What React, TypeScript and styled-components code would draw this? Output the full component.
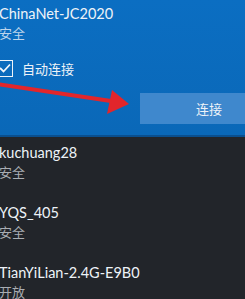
import React from 'react';
import styled, { createGlobalStyle } from 'styled-components';

const GlobalStyle = createGlobalStyle`
  html, body {
    margin: 0;
    padding: 0;
    background: #22252a;
    overflow: hidden;
  }
  body {
    font-family: Lato, "Noto Sans CJK SC", sans-serif;
  }
`;

const networks = [
  { name: 'kuchuang28', status: '安全' },
  { name: 'YQS_405', status: '安全' },
  { name: 'TianYiLian-2.4G-E9B0', status: '开放' },
];

const App = () => {
  return (
    <>
      <GlobalStyle />
      <Page>
        <ActivePanel>
          <Name>ChinaNet-JC2020</Name>
          <Status $light>安全</Status>
          <AutoRow>
            <CheckBox>
              <svg width="12" height="10" viewBox="0 0 12 10">
                <path d="M1 5 L4.5 8.5 L11 1.5" fill="none" stroke="#f2f6fa" strokeWidth="1.8" />
              </svg>
            </CheckBox>
            <AutoLabel>自动连接</AutoLabel>
          </AutoRow>
          <ButtonRow>
            <ConnectButton>连接</ConnectButton>
          </ButtonRow>
          <Arrow width="140" height="44" viewBox="0 0 140 44">
            <line x1="-2" y1="12" x2="112" y2="29" stroke="#e2262b" strokeWidth="4" strokeLinecap="round" />
            <polygon points="130,32 108,42 113,18" fill="#e2262b" />
          </Arrow>
        </ActivePanel>
        <List>
          {networks.map((n) => (
            <NetworkRow key={n.name}>
              <Name>{n.name}</Name>
              <Status>{n.status}</Status>
            </NetworkRow>
          ))}
        </List>
      </Page>
    </>
  );
};

export default App;

const Page = styled.div`
  width: 245px;
  height: 299px;
  overflow: hidden;
  background: #22252a;
`;

const ActivePanel = styled.div`
  position: relative;
  height: 137px;
  padding: 4px 0 0 0;
  box-sizing: border-box;
  margin-left: -1px;
  background: linear-gradient(180deg, #0b6ec2 0%, #0a68b8 100%);
  border-bottom: 2px solid #0a4f8e;
`;

const Name = styled.div`
  font-size: 14.5px;
  line-height: 20px;
  color: #eef3f8;
  white-space: nowrap;
`;

const Status = styled.div<{ $light?: boolean }>`
  font-size: 13px;
  line-height: 18px;
  color: ${(p) => (p.$light ? '#bcd4ec' : '#a9adb3')};
`;

const AutoRow = styled.div`
  display: flex;
  align-items: center;
  gap: 9px;
  margin-top: 16px;
  margin-left: -3px;
  height: 20px;
`;

const CheckBox = styled.div`
  width: 15px;
  height: 15px;
  border: 1.5px solid #eef3f8;
  display: flex;
  align-items: center;
  justify-content: center;
`;

const AutoLabel = styled.div`
  font-size: 13px;
  color: #eef3f8;
`;

const ButtonRow = styled.div`
  display: flex;
  margin-top: 15px;
  padding-left: 141px;
`;

const ConnectButton = styled.div`
  flex: none;
  width: 138px;
  height: 31px;
  display: flex;
  align-items: center;
  justify-content: center;
  background: #3f88cd;
  color: #eef3f8;
  font-size: 13px;
`;

const Arrow = styled.svg`
  position: absolute;
  left: 0;
  top: 72px;
`;

const List = styled.div`
  display: flex;
  flex-direction: column;
  margin-left: -1px;
`;

const NetworkRow = styled.div`
  padding: 6px 0 16px 0;
`;
